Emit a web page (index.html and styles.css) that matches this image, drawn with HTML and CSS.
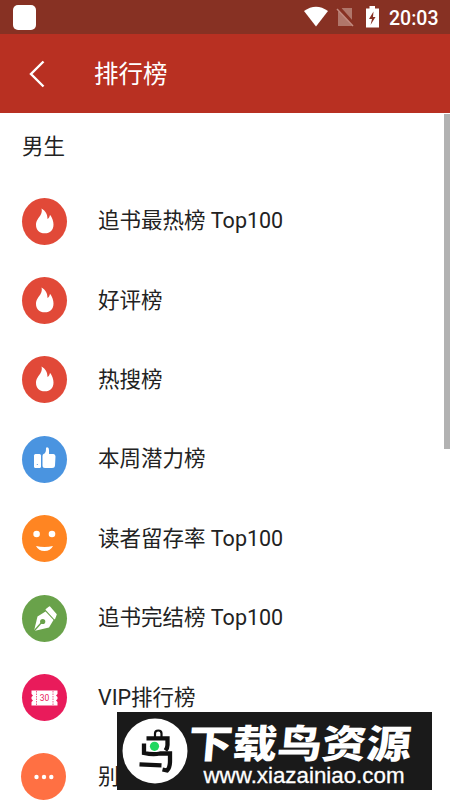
FILE: index.html
```html
<!DOCTYPE html>
<html lang="zh-CN">
<head>
<meta charset="utf-8">
<title>排行榜</title>
<link rel="stylesheet" href="styles.css">
</head>
<body>
<svg class="defs" width="0" height="0"><defs>
<symbol id="flame" viewBox="0 0 45 47"><path d="M19.500 10.500C23.700 13 25.500 16.500 25.500 21C27 20 27.700 18.500 28 16.700C30.200 19.500 31.500 23 31.500 26.500C31.500 32 28.200 35.300 22.800 35.300C17.200 35.300 14 32 14 26.700C14 22.500 16.500 20.500 18.300 17.500C19.700 15.200 20.200 13 19.500 10.500Z"/></symbol>
</defs></svg>
<div class="screen">
  <div class="status">
    <span class="app-dot"></span>
    <svg class="status-icons" viewBox="0 0 80 34" width="80" height="34">
      <path fill="#fff" d="M0 11Q12 2.500 24 11L12 26.500Z"/>
      <path fill="#b0766a" d="M38 8H48V26H34V12Z"/>
      <path stroke="#873123" stroke-width="4" d="M34 7L50 25"/>
      <path stroke="#c38b80" stroke-width="1.500" d="M33 9L49 26"/>
      <path fill="#fff" d="M65.500 6H71V8.500H75V27.500H62V8.500H65.500Z"/>
      <path fill="#873123" d="M69.500 11.500L65 19H68L66.500 25L71.500 17H69Z"/>
    </svg>
    <span class="time">20:03</span>
  </div>
  <header class="bar">
    <svg class="back" width="16" height="28" viewBox="0 0 16 28"><path d="M14.500 1.500L2 14L14.500 26.500"/></svg>
    <h1>排行榜</h1>
  </header>
  <main>
    <h2>男生</h2>
    <ul>
      <li><svg class="icon red"><use href="#flame"/></svg><span>追书最热榜 Top100</span></li>
      <li><svg class="icon red"><use href="#flame"/></svg><span>好评榜</span></li>
      <li><svg class="icon red"><use href="#flame"/></svg><span>热搜榜</span></li>
      <li><svg class="icon blue" viewBox="0 0 45 47"><rect x="12" y="18" width="7" height="14" rx="1.500"/><path d="M20.500 20Q20.500 18 22 17.800Q24 17 24 12.500Q24 11.300 25.200 11.300Q27 11.300 27 14V18H31.500Q33.500 18 33.500 20.500L33 29.500Q32.800 32 30 32H23Q20.500 32 20.500 29.500Z"/><circle cx="15.300" cy="28.500" r=".6" fill="#4a94e0"/></svg><span>本周潜力榜</span></li>
      <li><svg class="icon orange" viewBox="0 0 45 47"><circle cx="14.600" cy="19" r="3.300"/><circle cx="30" cy="19" r="3.300"/><path d="M14 31Q22.500 33 31 31Q28.500 36 22.500 36Q16.500 36 14 31Z"/></svg><span>读者留存率 Top100</span></li>
      <li><svg class="icon green" viewBox="0 0 45 47"><path d="M12 36L15.500 21.500L23.500 16.500L31.500 25L27 32.500Z"/><path d="M24.300 14.500L27.500 12L34 19.500L32.500 23.500Z" stroke="#fff" stroke-width="1.500" stroke-linejoin="round"/><path d="M12 36L20 27" stroke="#69a24a" stroke-width="1.300"/><circle cx="20.700" cy="26.500" r="2.600" fill="#69a24a"/></svg><span>追书完结榜 Top100</span></li>
      <li><svg class="icon pink" viewBox="0 0 45 47"><path d="M9.500 16.500H35.500V20L34 21.500L35.500 23V25L34 26.500L35.500 28V31.500H9.500V28L11 26.500L9.500 25V23L11 21.500L9.500 20Z"/><path d="M14.500 17V31M31 17V31" stroke="#e91b5b" stroke-width=".7" stroke-dasharray="1.500 1"/><text x="22.500" y="27.200" text-anchor="middle">30</text></svg><span>VIP排行榜</span></li>
      <li class="last"><svg class="icon coral" viewBox="0 0 45 47"><circle cx="15.500" cy="24" r="2.200"/><circle cx="23" cy="24" r="2.200"/><circle cx="30.300" cy="24" r="2.200"/></svg><span>别</span></li>
    </ul>
  </main>
  <i class="scroll"></i>
  <aside class="mark">
    <svg class="bird" width="66" height="66" viewBox="0 0 66 66">
      <circle cx="33" cy="33" r="32.500" fill="#fff"/>
      <g fill="none" stroke="#111" stroke-width="4.300">
        <path d="M33 19V15.500Q33 12.500 36.300 12.500Q39.500 12.500 39.500 15.500V19" stroke-width="2.200"/>
        <path d="M24.500 20.300H45.500V27Q45.500 30 43.500 32.500"/>
        <path d="M22 25.500V35Q31 37 38 35.500H48V43Q48 50 45 52.500L40.500 51.500"/>
        <path d="M17.500 46.300L39.500 47.300"/>
      </g>
      <circle cx="32.500" cy="28.300" r="4.600" fill="#20d760"/>
    </svg>
    <svg class="wordmark" width="250" height="78" viewBox="-10 0 250 78">
      <text class="brand" transform="translate(-1 46) skewX(-5)" textLength="223" lengthAdjust="spacingAndGlyphs">下载鸟资源</text>
      <text class="url" x="15.500" y="70.500" textLength="201" lengthAdjust="spacingAndGlyphs">www.xiazainiao.com</text>
    </svg>
  </aside>
</div>
</body>
</html>
```
FILE: styles.css
```css
* { box-sizing: border-box; }
body { margin: 0; font-family: Roboto, "Noto Sans CJK SC", sans-serif; color: #222; background: #fff; }
.defs { position: absolute; }
.screen { position: relative; width: 450px; height: 800px; overflow: hidden; }
.status { display: flex; align-items: center; height: 34px; padding: 0 12px 0 13px; background: #873123; color: #fff; }
.app-dot { width: 23px; height: 25px; border-radius: 5px; background: #fff; }
.status-icons { margin-left: auto; }
.time { width: 49px; margin-left: 5px; padding-top: 3px; font-size: 19.5px; font-weight: 500; white-space: nowrap; }
.bar { display: flex; align-items: center; height: 79px; padding-left: 29px; background: #b83022; color: #fff; }
.back { fill: none; stroke: #fff; stroke-width: 2.4; }
h1 { margin: 0 0 0 49px; padding-top: 2px; font-size: 24.5px; font-weight: 400; line-height: 36px; }
h2 { height: 68.5px; margin: 0; padding-left: 22px; font-size: 21.5px; font-weight: 400; line-height: 68px; }
ul { margin: 0; padding: 0; list-style: none; }
li { display: flex; align-items: center; height: 79.4px; padding-left: 22px; font-size: 21.5px; white-space: nowrap; }
li span { margin-left: 31px; line-height: 32px; }
.last { padding-left: 21px; }
.last span { margin-left: 32px; }
.icon { flex: none; width: 45px; height: 47px; border-radius: 50%; fill: #fff; }
.icon text { fill: #e91b5b; font-size: 8.5px; }
.red { background: #e14938; }
.blue { background: #4a94e0; }
.orange { background: #ff8522; }
.green { background: #69a24a; }
.pink { background: #e91b5b; }
.coral { background: #ff7043; }
.scroll { position: absolute; top: 114px; right: 0; width: 6px; height: 335px; background: #b2b2b2; }
.mark { position: absolute; left: 117px; top: 712px; display: flex; align-items: center; width: 315px; height: 78px; padding-left: 5px; background: #1a1a1a; }
.bird { flex: none; }
.wordmark { flex: none; margin-left: -10px; fill: #fff; }
.brand { font: 900 39px "Noto Sans CJK SC", sans-serif; }
.url { font: 22px "Liberation Sans", sans-serif; stroke: #fff; stroke-width: .3px; }
```
